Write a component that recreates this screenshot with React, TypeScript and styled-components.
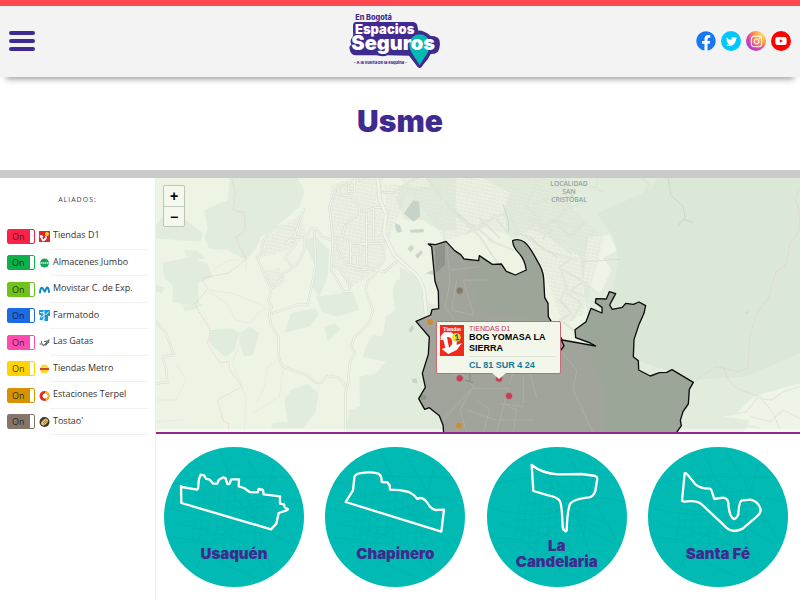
import React from 'react';
import styled, { createGlobalStyle } from 'styled-components';
import { FaFacebook, FaTwitter, FaInstagram, FaYoutube } from 'react-icons/fa';

const GlobalStyle = createGlobalStyle`
  *, *::before, *::after { box-sizing: border-box; }
  body {
    margin: 0;
    background: #fff;
    color: #333;
    font-family: "Open Sans", "Noto Sans", sans-serif;
  }
  h1, p { margin: 0; }
`;

const purple = '#3f2a90';
const display = '"Inter", "Lato", sans-serif';

const Page = styled.div`
  display: flex;
  flex-direction: column;
  min-height: 100vh;
`;

const Header = styled.header`
  display: grid;
  grid-template-columns: 1fr auto 1fr;
  align-items: center;
  padding: 6px 9px 7px;
  border-top: 6px solid #ff4850;
  background: #f3f3f3;
  box-shadow: 0 8px 6px -6px rgba(0, 0, 0, 0.4);
`;

const MenuButton = styled.button`
  display: flex;
  flex-direction: column;
  gap: 4px;
  width: 26px;
  padding: 0;
  border: 0;
  background: none;
  cursor: pointer;
`;

const MenuBar = styled.span`
  height: 4px;
  border-radius: 2px;
  background: ${purple};
`;

const LogoLink = styled.a`
  display: block;
  svg { display: block; }
`;

const Socials = styled.nav`
  display: flex;
  justify-content: flex-end;
  gap: 5px;
`;

const SocialLink = styled.a<{ $bg: string; $size: number }>`
  display: grid;
  place-items: center;
  width: 20px;
  height: 20px;
  border-radius: 50%;
  background: ${(p) => p.$bg};
  color: #fff;
  font-size: ${(p) => p.$size}px;
`;

const TitleBand = styled.div`
  padding: 24px 16px 28px;
  border-bottom: 8px solid #cacaca;
  text-align: center;
`;

const Title = styled.h1`
  color: ${purple};
  font: 900 30px/41px ${display};
`;

const Body = styled.div`
  display: flex;
  flex: 1;
`;

const Sidebar = styled.aside`
  flex: none;
  width: 156px;
  padding: 17px 7px 0;
  border-right: 1px solid #ececec;
`;

const SideTitle = styled.p`
  margin-bottom: 18px;
  color: #444;
  font-size: 7px;
  line-height: 10px;
  letter-spacing: 1px;
  text-align: center;
`;

const AllyList = styled.div`
  display: grid;
  grid-auto-rows: 1fr;
  min-height: 212px;
`;

const AllyRow = styled.label`
  display: flex;
  align-items: center;
  cursor: pointer;
`;

const Switch = styled.span`
  display: grid;
  align-items: center;
  margin-right: 4px;
`;

const SwitchInput = styled.input<{ $color: string }>`
  grid-area: 1 / 1;
  appearance: none;
  width: 28px;
  height: 15px;
  margin: 0;
  border: 1px solid ${(p) => p.$color};
  border-radius: 2px;
  background: linear-gradient(to right, ${(p) => p.$color} 22px, #fff 22px);
  cursor: pointer;
`;

const SwitchText = styled.span`
  grid-area: 1 / 1;
  padding-left: 5px;
  color: rgba(20, 20, 20, 0.85);
  font-size: 9px;
  line-height: 15px;
  pointer-events: none;
`;

const AllyIcon = styled.svg`
  flex: none;
  width: 11px;
  height: 11px;
`;

const AllyName = styled.span`
  flex: 1;
  align-self: stretch;
  padding-left: 3px;
  border-bottom: 1px solid #f1f1f1;
  font-size: 9px;
  line-height: 23px;
  white-space: nowrap;
`;

const Content = styled.main`
  flex: 1;
  min-width: 0;
`;

const MapBox = styled.section`
  position: relative;
  height: 256px;
  border-bottom: 2px solid #92278f;
  overflow: hidden;
`;

const MapDrawing = styled.svg`
  display: block;
  width: 100%;
  height: 100%;
`;

const ZoomControl = styled.div`
  position: absolute;
  top: 7px;
  left: 7px;
  display: flex;
  flex-direction: column;
  border: 1px solid #bcc4b4;
  border-radius: 2px;
  background: #f4f8ed;
`;

const ZoomButton = styled.button`
  width: 20px;
  height: 20px;
  padding: 0;
  border: 0;
  background: none;
  color: #000;
  font: 700 14px/20px "Liberation Sans", Arial, sans-serif;
  cursor: pointer;
  & + & { border-top: 1px solid #c3cabb; line-height: 18px; }
`;

const Popup = styled.article`
  position: absolute;
  top: 143px;
  left: calc(50% - 42px);
  display: flex;
  gap: 5px;
  width: 125px;
  padding: 3px 4px 2px 3px;
  border: 1px solid #d0667a;
  border-radius: 2px;
  background: #f3f7ea;
  font-family: "Liberation Sans", Arial, sans-serif;
  &::after {
    content: '';
    position: absolute;
    top: 100%;
    left: 50%;
    margin-left: -7px;
    border: 7px solid transparent;
    border-top: 6px solid #f3f7ea;
    border-bottom: 0;
  }
`;

const PopupLogo = styled.svg`
  flex: none;
  width: 24px;
  height: 31px;
`;

const PopupText = styled.div`
  flex: 1;
`;

const PopupBrand = styled.p`
  color: #c4314b;
  font-size: 7px;
  line-height: 7px;
`;

const PopupName = styled.p`
  padding-bottom: 2px;
  border-bottom: 1px solid #dde3d6;
  color: #000;
  font-size: 9px;
  font-weight: 700;
  line-height: 11px;
`;

const PopupAddress = styled.p`
  padding-top: 3px;
  color: #0f7ba0;
  font-size: 9px;
  font-weight: 700;
  line-height: 11px;
`;

const Districts = styled.nav`
  display: flex;
  justify-content: space-between;
  flex-wrap: wrap;
  gap: 12px;
  padding: 13px 12px 13px 8px;
`;

const District = styled.a`
  display: grid;
  width: 140px;
  height: 140px;
  border-radius: 50%;
  background: #00bab3;
  overflow: hidden;
  text-decoration: none;
`;

const DistrictShape = styled.svg`
  grid-area: 1 / 1;
  width: 140px;
  height: 140px;
`;

const DistrictName = styled.span`
  grid-area: 1 / 1;
  display: flex;
  align-items: center;
  justify-content: center;
  margin-top: 76px;
  padding: 0 24px 2px;
  height: 64px;
  color: ${purple};
  font: 900 15px/16px ${display};
  text-align: center;
`;

const Logo = () => (
  <svg width="103" height="58" viewBox="55 38 309 174" role="img" aria-label="En Bogotá Espacios Seguros">
    <g fontFamily="Inter, sans-serif" fontWeight="900">
      <path fill={purple} d="M76 68H246Q257 68 260 79L263 94Q270 92 280 97Q292 101 300 110Q318 108 326 121Q331 140 322 157Q314 165 300 164Q293 180 281 192L272 204Q267 209 261 203Q244 180 235 169L170 168Q160 174 138 168H78Q60 169 57 150Q54 140 62 136Q56 122 66 112Q69 104 67 98V78Q68 69 76 68Z" />
      <path fill="#00bab3" d="M236 136a31 31 0 0 1 62 0c0 24-21 40-31 62c-10-22-31-38-31-62z" />
      <text x="74" y="62" fontSize="22" fontWeight="800" fill={purple}>En Bogotá</text>
      <text x="73" y="105" fontSize="39" fill="#fff">Espacios</text>
      <text x="62" y="153" fontSize="60" fill="#fff">Seguros</text>
      <text x="69" y="193" fontSize="12" fontWeight="800" fill={purple}>- A la vuelta de la esquina -</text>
    </g>
  </svg>
);

const icons: Record<string, React.ReactNode> = {
  d1: <><path fill="#e5232b" d="M0 0h22v22H0z" /><path fill="#fff" d="M1 8l6 1 2 4 4-3 3 1c0 6-4 9-9 10L3 14z" /><path fill="#e5232b" d="M7 12l4-2 2 3-5 4z" /><circle cx="16" cy="6" r="4" fill="#f6d51f" /></>,
  jumbo: <><circle cx="11" cy="12" r="9" fill="#16a35b" /><path stroke="#d8f0df" strokeWidth="3" strokeDasharray="3 1" d="M3 12h17" /></>,
  movistar: <path d="M2 17C3 6 6 5 10 13c1 3 2 3 3 0 3-9 6-7 7 3" fill="none" stroke="#1287c4" strokeWidth="4" strokeLinecap="round" />,
  farmatodo: <><path fill="#1598dc" d="M0 0h22v12h-4v10h-7v-7l-6 6-4-2 3-8-4-2z" /><path stroke="#fff" strokeWidth="2" d="M2 5l8 1M10 1v17M13 10l7-7M4 15l7-6" /></>,
  gatas: <path d="M1 14h7v4M5 13V8M10 9h5v7h-4l3-4M16 6v8M19 5v7M16 9l5-3M8 17l13-7" fill="none" stroke="#666" strokeWidth="2" />,
  metro: <><circle cx="11" cy="12" r="9" fill="#f6df32" /><path stroke="#dc4130" strokeWidth="4" d="M2 12h18" /></>,
  terpel: <><circle cx="11" cy="12" r="10" fill="#dd2c26" /><path d="M12 2a10 10 0 0 1 9 10c0 5-4 9-9 9 4-5 0-5 0-9z" fill="#f4b41e" /><circle cx="12" cy="12" r="5" fill="#fff" /></>,
  tostao: <><circle cx="11" cy="12" r="10" fill="#3d352c" /><ellipse cx="11" cy="12" rx="8" ry="5" transform="rotate(-45 11 12)" fill="#e2bd78" /><path stroke="#6b5538" strokeWidth="1" d="M7 11l5 5M9 9l5 5M11 7l5 5" /></>,
};

const allies = [
  { name: 'Tiendas D1', color: '#fb2249', icon: 'd1' },
  { name: 'Almacenes Jumbo', color: '#0cb14b', icon: 'jumbo' },
  { name: 'Movistar C. de Exp.', color: '#6fc31c', icon: 'movistar' },
  { name: 'Farmatodo', color: '#1c6ae4', icon: 'farmatodo' },
  { name: 'Las Gatas', color: '#ff4bb0', icon: 'gatas' },
  { name: 'Tiendas Metro', color: '#ffd200', icon: 'metro' },
  { name: 'Estaciones Terpel', color: '#d69200', icon: 'terpel' },
  { name: "Tostao'", color: '#85756a', icon: 'tostao' },
];

const districts = [
  { name: 'Usaquén', d: 'M51 117L53 120L99 128L102 125L105 96L110 83L120 85L126 95L137 98L148 110H160L164 99L178 91L185 94L190 111H196L202 97H225L224 118L240 123L257 135L281 136L284 126L297 129L299 142L348 148V170L360 172L362 181L372 187L366 191L344 198L337 230L321 247L52 168Z' },
  { name: 'Chapinero', d: 'M62 165L84 130L88 92Q90 81 103 79Q135 73 158 79Q171 84 170 105L187 106L194 115L195 128Q225 128 252 135Q267 142 277 156Q286 151 292 154Q300 158 306 166Q315 185 332 189L357 188L349 254Z' },
  { name: 'La Candelaria', d: 'M134 54Q166 80 214 82L284 81L325 87Q333 90 330 101L325 132Q319 149 307 151Q255 157 249 172Q241 190 239 250L236 253Q228 249 227 240Q225 176 219 163Q214 151 184 145L139 132Z' },
  { name: 'Santa Fé', d: 'M110 79L102 162L109 164Q145 159 160 171L226 233Q240 250 259 252Q272 251 284 245L327 208Q341 196 337 184Q330 163 307 158L280 161Q273 166 271 202Q265 216 258 216Q244 211 241 170Q241 154 225 152L199 156L190 129L186 125Q160 126 142 112L120 85Q115 77 110 79Z' },
];

const StreetTexture = () => (
  <g fill="none" stroke="#008f98" strokeWidth="2" opacity=".24">
    <path d="M0 118Q100 90 180 88L420 92M12 184Q90 205 180 202L330 150L420 165M40 230Q150 250 240 290L350 410M160 0L205 100L260 170L340 420M230 0L310 140L400 300M0 268L110 280L180 350L280 395M80 400L125 300L300 170L330 50M180 80Q230 220 380 290" />
    <path strokeWidth="1" d="M105 130l-20 150M125 125l-20 155M150 110l-25 180M170 100l-20 210M195 95l-15 220M215 100l-12 190M235 110l-10 210M255 115l-10 190M280 120l-8 180M300 125l-10 170M90 145l230-15M92 170l235-14M95 195l240-20M92 220l230-12M85 245l245-12M100 265l210-10M70 285l180 8M250 185l100 40M240 200l110 45" />
  </g>
);

const westRoads = 'M443 118L416 198L388 221L411 210L420 222L386 264L410 290M416 178Q370 160 346 184Q314 210 318 244L303 262L326 315L345 357L338 392L347 411L340 430L345 466L367 500L369 565L380 590L457 617Q481 645 498 637Q506 617 522 618L546 623L570 648M345 357Q375 335 384 308L407 296Q430 280 446 235L447 205L416 198M447 205L465 176L478 174L497 200L530 211M475 185L479 280L471 330L455 403L429 402L350 430M0 456L30 490L54 555L20 560L31 600L34 637L0 640';
const centralRoads = 'M540 60L520 110L531 205L525 300L564 365H580V342L554 298L532 287M560 194L570 160L612 127L606 100L584 78L549 74L545 54L620 24M545 202Q535 240 570 282L640 296L684 306L727 270M560 194L580 220H682M584 220V280M584 228H613V252H584M604 252V286M631 130V285M652 120V204H684V270L650 320L634 335L629 365L651 420L640 456L614 486L594 502L586 535L598 550L582 575L576 640L568 670V784M622 125L660 112L676 112M612 223L630 222M600 286V300L630 298M634 160L652 158M596 24V65H577V50';
const eastRoads = 'M80 24L130 88L180 145L240 200L300 290M150 110L230 180L285 140L330 125L350 190L390 200L430 240L530 270M410 35L380 110L420 145L390 172L450 200L515 250M470 90L500 110L470 150L535 180M400 100L450 85L510 115L550 100M385 145L440 170M415 180L460 150L510 200L550 160M220 165L280 215M240 145L298 203M200 190L260 150M280 135L325 190M265 210L340 240M510 270L480 290L500 350L480 390L515 430L480 450L520 480M490 300L550 335L500 370L545 400L515 450M500 360L560 380M455 180L430 205M550 40L610 65M590 24V60M725 24L750 45L735 66';
const border = 'M85 222L107 224L138 214L164 242L182 254L192 267L236 272L238 257L277 283L304 282L319 304L346 315L379 300Q374 268 357 250Q338 230 338 212Q355 204 373 216Q390 230 413 275Q429 300 431 325L434 382L444 400L445 440L487 510L587 528L571 519L527 503L525 479L558 455L573 415L606 429V412L586 398L588 386L619 387L628 365L647 371L629 405L637 418L667 412L677 400L700 403L717 396L737 407L732 430L716 466L702 509L700 560L715 572L716 600L751 618L778 608L800 607L816 599L880 637L868 658L865 702L849 725L841 751L844 767L828 790H131L129 765L118 737L88 713L74 718L56 686L76 652L67 610L85 553L88 501L48 454L92 435L96 419L116 416L115 364L105 334L95 230Z';

const pins = [
  { x: 179, y: 362, c: '#817a6d' },
  { x: 90, y: 456, c: '#c78d40' },
  { x: 179, y: 625, c: '#bf4057' },
  { x: 297, y: 626, c: '#bf4057' },
  { x: 327, y: 678, c: '#bf4057' },
  { x: 177, y: 767, c: '#c78d40' },
];

const Roads = ({ d, w = 4 }: { d: string; w?: number }) => (
  <g fill="none" strokeLinejoin="round" strokeLinecap="round">
    <path d={d} stroke="#d5dccf" strokeWidth={w + 3} />
    <path d={d} stroke="#eff4e8" strokeWidth={w} />
  </g>
);

const DistrictMap = () => (
  <MapDrawing viewBox="0 0 1932 762" preserveAspectRatio="xMidYMid slice" role="img" aria-label="Mapa de Usme">
    <defs>
      <pattern id="streets" width="13" height="11" patternUnits="userSpaceOnUse" patternTransform="rotate(12)">
        <path d="M0 0H13M0 0V11M6 0V6M0 6H13" stroke="#dce1d5" strokeWidth="1.5" fill="none" />
      </pattern>
      <clipPath id="usme"><path d={border} /></clipPath>
    </defs>
    <path fill="#edf4e4" d="M0 0h1932v762H0z" />
    <g transform="translate(0 -24)" fill="#e1ecdc">
      <path d="M220 24H425L445 65L430 110L350 180L315 200L300 235L270 270L215 240L160 236L145 200L155 175L145 120L215 90Z" />
      <path d="M0 165L30 130L70 135L140 190L135 215L60 210L0 205ZM85 240L120 242L150 265L120 270L90 255ZM20 278L100 262L155 282L170 320L125 340L130 395L85 405L50 395V345L25 325ZM0 345L25 352L18 370L0 365ZM82 410L125 395L140 405L110 420L85 422ZM165 480L225 475L250 490L235 540L210 562L175 535L160 515ZM250 490L280 470L310 490L290 555L265 560L250 515ZM385 690L405 660L455 642L487 670L478 730L440 775H345L350 760L395 755ZM405 430L475 415L490 432L460 470L385 488ZM505 470L540 460L553 478L515 515ZM480 380L590 365L610 420L540 440L500 425Z" />
      <path d="M780 320L720 330L710 360L718 420L690 440L680 500L650 495L635 520L620 560L690 575L660 610L610 620L612 710L580 720L570 790H960V430L820 400Z" />
      <path d="M440 210L480 200L520 240L515 320L490 380L470 350L480 290ZM720 90L732 50H820V24H900V180L850 180L800 150L745 150Z" />
    </g>
    <g transform="translate(732 -24)">
      <path fill="#e1ecdc" d="M250 24H1200V790H600L560 420L540 260L410 170L330 210L310 130L330 70Z" />
      <path fill="#dce8d7" d="M590 130L660 100L750 60L770 24H1200V550L1040 620L880 630L680 560L630 400L655 265L640 200Z" />
      <path fill="#e1ecdc" d="M0 290L60 330L80 440L48 454L90 500L70 610L76 652L56 686L130 740V790H0Z" />
      <path fill="#eef4e6" d="M960 740L1010 730L1060 680L1160 650L1200 640V790H1030L1050 750ZM565 200L630 195L650 240L610 265L635 300L600 370L550 330Z" />
    </g>
    <g fill="url(#streets)">
      <path d="M525 20L600 0H680V110L684 250L630 300L580 330L530 250L520 130ZM330 180L430 110L450 170L390 220L310 240ZM320 280L370 270L390 310L345 340ZM732 0H1240L1250 90L1345 180L1320 270L1280 410L1220 440L1170 290L1110 190L990 150L870 190Z" />
      <path d="M685 20h80l-40 100-30 80z" />
    </g>
    <g transform="translate(0 -24)">
      <Roads d={westRoads} />
      <Roads d={centralRoads} />
      <g fill="none" stroke="#e2e7dc" strokeWidth="2">
        <path d="M160 365L210 400L240 450L280 460L310 425L340 412M160 360L230 370L330 410M250 520L230 580L270 680L265 784M365 570L335 590L325 650L300 700M0 690L60 690L90 630L60 580M0 755L80 750M270 300V270L220 270L170 300M290 730L370 680L380 600" />
      </g>
      <path d="M228 28L238 66L231 120L265 128L268 180L240 202L250 230L271 268L218 309L145 323L140 335L157 354L116 402L163 480L155 520L190 578L219 575L220 598L258 650L184 690L203 755L218 760V784" fill="none" stroke="#e5cfc5" strokeWidth="3" strokeDasharray="4 4" />
    </g>
    <g transform="translate(732 -24)">
      <Roads d={eastRoads} w={2} />
      <Roads d="M132 24V210M-60 66L-20 68L24 38L50 24" w={3} />
      <Roads d="M-67 24L-60 90L-42 130L-48 190L-18 255L10 280L55 320L72 360L78 435" w={9} />
      <g fill="#bdcbc3">
        <path d="M12 130L40 90L58 95L60 140L40 155ZM28 180L70 176L72 187L35 188ZM22 235L35 225L42 235L32 246ZM45 255L65 240L68 250L52 266ZM78 310L98 300L100 315ZM-14 160L0 165L6 185L-8 188L-14 175ZM26 478L38 464L42 476L32 490ZM35 628L50 625L52 640L38 638Z" opacity=".75" />
      </g>
      <path d="M805 24L812 75L850 110L856 148M310 105L325 150V185" fill="none" stroke="#c8d8cc" strokeWidth="3" />
      <path d="M550 275L660 268M360 190L470 260" fill="none" stroke="#cbd9cb" strokeWidth="2" />
      <path d="M833 168L850 148L882 158M1035 430L1048 425" fill="none" stroke="#cddacd" strokeWidth="4" />
      <path d="M1195 60L1186 90L1197 120L1200 180L1170 220L1160 280L1128 305L1105 385L1070 430L1050 500L1043 595L1015 605L948 590L880 637M970 590Q985 650 1030 663L1080 680L1120 730L1142 784" fill="none" stroke="#e4cdc6" strokeWidth="3" strokeDasharray="4 4" />
      <path d="M960 740L1040 725L1070 685L1115 690L1150 665L1200 650M1050 740L1110 755L1150 720L1200 745M1000 760L1080 775" fill="none" stroke="#e2e9dc" strokeWidth="4" />
      <path d="M-732 777H1200V786H-732z" fill="#fff" opacity=".45" />
      <path d={border} fill="#9da599" />
      <g clipPath="url(#usme)">
        <path d="M92 225L140 212L200 270L210 330L230 380L250 430L445 450L500 510L560 530L590 600L610 650V790H60V680L80 560L48 454L116 416Z" fill="#a1a49b" />
        <path d="M560 525L600 600L615 650V790H900V520L740 370L530 440Z" fill="#9ba598" />
        <path d="M104 232L135 220L135 285L108 308ZM62 675h16v14H62z" fill="#8c948b" />
        <path d="M140 215L150 340L135 410L170 460M170 330L155 420L220 435L190 330L260 330M150 300L240 290M120 560L180 600L220 650L120 760M220 650L180 720L200 785M220 655H325L290 785M330 640L350 570L480 540L530 600L520 660L580 790M230 690L270 720L250 785M310 700L350 720L340 785M300 750H400M370 620V700M140 610L200 620M300 700L370 710M390 610L410 680M200 720L290 750" fill="none" stroke="#adafa6" strokeWidth="3" />
        <path d="M195 630L220 638M210 610V635" stroke="#878f91" strokeWidth="4" />
      </g>
      <path d={border} fill="none" stroke="#0c0c0c" strokeWidth="4" strokeLinejoin="round" />
      <path d="M484 510L492 528L483 540" fill="none" stroke="#0c0c0c" strokeWidth="4" />
      {pins.map((p) => (
        <circle key={`${p.x}-${p.y}`} cx={p.x} cy={p.y} r="11" fill={p.c} stroke="#b4aaa0" strokeWidth="2" />
      ))}
      <g fontFamily="Open Sans, sans-serif" fontSize="20" fontWeight="600" fill="#93a3a2" textAnchor="middle">
        <text x="507" y="49">LOCALIDAD</text>
        <text x="507" y="73">SAN</text>
        <text x="507" y="97">CRISTÓBAL</text>
      </g>
    </g>
  </MapDrawing>
);

const socials = [
  { label: 'Facebook', bg: '#fff', size: 20, icon: <FaFacebook color="#1877f2" /> },
  { label: 'Twitter', bg: '#00c8fa', size: 11, icon: <FaTwitter /> },
  { label: 'Instagram', bg: 'radial-gradient(circle at 80% 20%, #ffd65a 5%, #ff9650 35%, #d13fb4 65%, #7448ef 95%)', size: 13, icon: <FaInstagram /> },
  { label: 'YouTube', bg: '#f00', size: 12, icon: <FaYoutube /> },
];

export default function App() {
  return (
    <Page>
      <GlobalStyle />
      <Header>
        <MenuButton aria-label="Menú"><MenuBar /><MenuBar /><MenuBar /></MenuButton>
        <LogoLink href="#inicio"><Logo /></LogoLink>
        <Socials aria-label="Redes sociales">
          {socials.map((s) => (
            <SocialLink key={s.label} href={`#${s.label}`} aria-label={s.label} $bg={s.bg} $size={s.size}>{s.icon}</SocialLink>
          ))}
        </Socials>
      </Header>
      <TitleBand><Title>Usme</Title></TitleBand>
      <Body>
        <Sidebar>
          <SideTitle>ALIADOS:</SideTitle>
          <AllyList>
            {allies.map((a) => (
              <AllyRow key={a.name}>
                <Switch>
                  <SwitchInput type="checkbox" defaultChecked $color={a.color} aria-label={a.name} />
                  <SwitchText aria-hidden="true">On</SwitchText>
                </Switch>
                <AllyIcon viewBox="0 0 22 22" aria-hidden="true">{icons[a.icon]}</AllyIcon>
                <AllyName>{a.name}</AllyName>
              </AllyRow>
            ))}
          </AllyList>
        </Sidebar>
        <Content>
          <MapBox>
            <DistrictMap />
            <ZoomControl>
              <ZoomButton aria-label="Acercar">+</ZoomButton>
              <ZoomButton aria-label="Alejar">−</ZoomButton>
            </ZoomControl>
            <Popup>
              <PopupLogo viewBox="0 0 72 93" aria-hidden="true">
                <path fill="#f12a1d" d="M0 0h72v93H0z" />
                <text x="36" y="18" textAnchor="middle" fontFamily="Liberation Serif, serif" fontWeight="700" fontSize="16" fill="#fff">Tiendas</text>
                <path fill="#fff" fillRule="evenodd" d="M2 34L12 22L34 22Q53 34 50 60L66 54L50 75L25 87L5 72L16 68L10 44L2 46ZM21 36L27 68Q40 60 36 46Q33 35 21 36Z" />
                <circle cx="49" cy="37" r="13" fill="#f4df23" />
                <path d="M45 34l6-5 2 15m-6 1l11-2" fill="none" stroke="#1667a8" strokeWidth="4" />
              </PopupLogo>
              <PopupText>
                <PopupBrand>TIENDAS D1</PopupBrand>
                <PopupName>BOG YOMASA LA SIERRA</PopupName>
                <PopupAddress>CL 81 SUR 4 24</PopupAddress>
              </PopupText>
            </Popup>
          </MapBox>
          <Districts aria-label="Localidades">
            {districts.map((d) => (
              <District key={d.name} href={`#${d.name}`}>
                <DistrictShape viewBox="0 0 420 420" aria-hidden="true">
                  <StreetTexture />
                  <path d={d.d} fill="none" stroke="#fff" strokeWidth="7" strokeLinejoin="round" />
                </DistrictShape>
                <DistrictName>{d.name}</DistrictName>
              </District>
            ))}
          </Districts>
        </Content>
      </Body>
    </Page>
  );
}
